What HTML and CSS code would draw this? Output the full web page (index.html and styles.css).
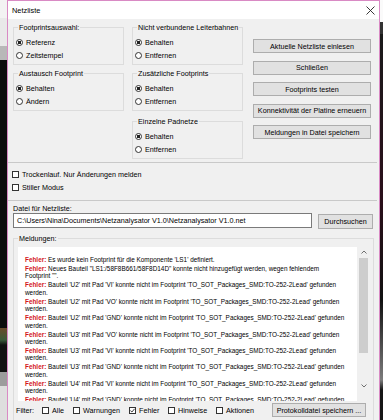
FILE: index.html
```html
<!DOCTYPE html>
<html lang="de">
<head>
    <meta charset="UTF-8">
    <title>Netzliste</title>
    <link rel="stylesheet" href="styles.css">
</head>
<body>
    <div class="screen">
        <div class="bg-left"></div>

        <div class="dialog">
            <div class="titlebar">
                <span class="title">Netzliste</span>
                <svg class="close" width="9" height="9" viewBox="0 0 9 9">
                    <path d="M0.5 0.5 L8.5 8.5 M8.5 0.5 L0.5 8.5" stroke="#222" stroke-width="0.9" fill="none"/>
                </svg>
            </div>

            <div class="content">
                <div class="top">
                    <div class="col">
                        <div class="group">
                            <span class="group-title">Footprintsauswahl:</span>
                            <label class="option"><span class="radio checked"></span>Referenz</label>
                            <label class="option"><span class="radio"></span>Zeitstempel</label>
                        </div>
                        <div class="group">
                            <span class="group-title">Austausch Footprint</span>
                            <label class="option"><span class="radio checked"></span>Behalten</label>
                            <label class="option"><span class="radio"></span>Ändern</label>
                        </div>
                    </div>

                    <div class="col">
                        <div class="group">
                            <span class="group-title">Nicht verbundene Leiterbahnen</span>
                            <label class="option"><span class="radio checked"></span>Behalten</label>
                            <label class="option"><span class="radio"></span>Entfernen</label>
                        </div>
                        <div class="group">
                            <span class="group-title">Zusätzliche Footprints</span>
                            <label class="option"><span class="radio checked"></span>Behalten</label>
                            <label class="option"><span class="radio"></span>Entfernen</label>
                        </div>
                        <div class="group group-last">
                            <span class="group-title">Einzelne Padnetze</span>
                            <label class="option"><span class="radio checked"></span>Behalten</label>
                            <label class="option"><span class="radio"></span>Entfernen</label>
                        </div>
                    </div>

                    <div class="buttons">
                        <button class="btn">Aktuelle Netzliste einlesen</button>
                        <button class="btn">Schließen</button>
                        <button class="btn">Footprints testen</button>
                        <button class="btn">Konnektivität der Platine erneuern</button>
                        <button class="btn">Meldungen in Datei speichern</button>
                    </div>
                </div>

                <div class="sep"></div>

                <div class="checks">
                    <label class="option"><span class="checkbox"></span>Trockenlauf. Nur Änderungen melden</label>
                    <label class="option"><span class="checkbox"></span>Stiller Modus</label>
                </div>

                <div class="sep"></div>

                <div class="file">
                    <div class="file-label">Datei für Netzliste:</div>
                    <div class="file-row">
                        <div class="input">C:\Users\Nina\Documents\Netzanalysator V1.0\Netzanalysator V1.0.net</div>
                        <button class="btn btn-browse">Durchsuchen</button>
                    </div>
                </div>

                <div class="group messages">
                    <span class="group-title">Meldungen:</span>
                    <div class="log-box">
                        <div class="log">
                            <div class="entry"><b>Fehler:</b> Es wurde kein Footprint für die Komponente 'LS1' definiert.</div>
                            <div class="entry"><b>Fehler:</b> Neues Bauteil "LS1:/58F8B661/58F8D14D" konnte nicht hinzugefügt werden, wegen fehlendem Footprint&nbsp;"".</div>
                            <div class="entry"><b>Fehler:</b> Bauteil 'U2' mit Pad 'VI' konnte nicht im Footprint 'TO_SOT_Packages_SMD:TO-252-2Lead' gefunden werden.</div>
                            <div class="entry"><b>Fehler:</b> Bauteil 'U2' mit Pad 'VO' konnte nicht im Footprint 'TO_SOT_Packages_SMD:TO-252-2Lead' gefunden werden.</div>
                            <div class="entry"><b>Fehler:</b> Bauteil 'U2' mit Pad 'GND' konnte nicht im Footprint 'TO_SOT_Packages_SMD:TO-252-2Lead' gefunden werden.</div>
                            <div class="entry"><b>Fehler:</b> Bauteil 'U3' mit Pad 'VO' konnte nicht im Footprint 'TO_SOT_Packages_SMD:TO-252-2Lead' gefunden werden.</div>
                            <div class="entry"><b>Fehler:</b> Bauteil 'U3' mit Pad 'VI' konnte nicht im Footprint 'TO_SOT_Packages_SMD:TO-252-2Lead' gefunden werden.</div>
                            <div class="entry"><b>Fehler:</b> Bauteil 'U3' mit Pad 'GND' konnte nicht im Footprint 'TO_SOT_Packages_SMD:TO-252-2Lead' gefunden werden.</div>
                            <div class="entry"><b>Fehler:</b> Bauteil 'U4' mit Pad 'VI' konnte nicht im Footprint 'TO_SOT_Packages_SMD:TO-252-2Lead' gefunden werden.</div>
                            <div class="entry"><b>Fehler:</b> Bauteil 'U4' mit Pad 'GND' konnte nicht im Footprint 'TO_SOT_Packages_SMD:TO-252-2Lead' gefunden werden.</div>
                        </div>
                        <div class="scrollbar">
                            <svg width="6" height="4" viewBox="0 0 6 4"><path d="M0.5 3.5 L3 1 L5.5 3.5" stroke="#606060" stroke-width="0.9" fill="none"/></svg>
                            <div class="thumb"></div>
                            <svg width="6" height="4" viewBox="0 0 6 4"><path d="M0.5 0.5 L3 3 L5.5 0.5" stroke="#606060" stroke-width="0.9" fill="none"/></svg>
                        </div>
                    </div>

                    <div class="filter">
                        <span class="filter-label">Filter:</span>
                        <label class="option f-alle"><span class="checkbox"></span>Alle</label>
                        <label class="option f-warn"><span class="checkbox"></span>Warnungen</label>
                        <label class="option f-err"><span class="checkbox checked">
                            <svg width="5" height="5" viewBox="0 0 5 5"><path d="M0.4 2.6 L1.9 4 L4.6 0.8" stroke="#222" stroke-width="0.9" fill="none"/></svg>
                        </span>Fehler</label>
                        <label class="option f-hint"><span class="checkbox"></span>Hinweise</label>
                        <label class="option f-act"><span class="checkbox"></span>Aktionen</label>
                        <button class="btn btn-log">Protokolldatei speichern ...</button>
                    </div>
                </div>
            </div>
        </div>

        <div class="bg-right"></div>
    </div>
</body>
</html>
```

FILE: styles.css
```css
* {
    margin: 0;
    padding: 0;
    box-sizing: border-box;
}

body {
    font-family: 'Liberation Sans', Arial, sans-serif;
    font-size: 7.2px;
    color: #000;
    background: #101010;
    overflow: hidden;
}

.screen {
    display: flex;
    height: 420px;
    overflow: hidden;
}

/* application behind the dialog */
.bg-left {
    width: 7px;
    flex-shrink: 0;
    background: linear-gradient(#f3f3f3 0, #f3f3f3 18px, #e9e9e9 18px, #e9e9e9 46px, #b8b8b8 46px, #b8b8b8 60px,
        #0d0d0d 60px, #0d0d0d 328px, #6b4a2a 328px, #3a5a3a 340px, #111 345px, #111 372px,
        #9c9c9c 372px, #9c9c9c 386px, #dedede 386px);
}

.bg-right {
    width: 3px;
    flex-shrink: 0;
    background: linear-gradient(#fafafa 0, #fafafa 22px, #333 22px, #333 34px, #1a1a1a 34px, #2a0f1a 200px, #111 300px, #7c7c7c 380px, #151515 390px);
}

.dialog {
    width: 373px;
    flex-shrink: 0;
    border: 1px solid #d98ac4;
    border-bottom: none;
    background: #f0f0f0;
    display: flex;
    flex-direction: column;
    overflow: hidden;
}

.titlebar {
    height: 18px;
    flex-shrink: 0;
    background: #fff;
    display: flex;
    align-items: center;
    justify-content: space-between;
    padding: 0 4px;
}

.title {
    font-size: 7.4px;
}

.close {
    display: block;
}

.content {
    padding: 8px 5px 0 5px;
    flex-shrink: 0;
}

.top {
    display: grid;
    grid-template-columns: 111px 111px 120px;
    column-gap: 8px;
}

.top .buttons {
    margin-left: 2px;
}

.col {
    display: flex;
    flex-direction: column;
    gap: 8px;
}

.col .group-last {
    margin-top: 2px;
}

.group {
    position: relative;
    border: 1px solid #dcdcdc;
    padding: 8px 2px 2px 2px;
}

.group-title {
    position: absolute;
    top: -5px;
    left: 4px;
    padding: 0 1px;
    line-height: 9px;
    background: #f0f0f0;
}

.option {
    display: flex;
    align-items: center;
    height: 13px;
    white-space: nowrap;
}

.radio {
    width: 7px;
    height: 7px;
    border: 1px solid #333;
    border-radius: 50%;
    background: #fff;
    margin-right: 3px;
    flex-shrink: 0;
}

.radio.checked {
    background: radial-gradient(circle, #222 0, #222 1.5px, #fff 2px);
}

.checkbox {
    width: 7px;
    height: 7px;
    border: 1px solid #333;
    background: #fff;
    margin-right: 3px;
    flex-shrink: 0;
    display: flex;
    align-items: center;
    justify-content: center;
}

.checkbox svg {
    display: block;
}

.buttons {
    display: flex;
    flex-direction: column;
    gap: 7.5px;
    padding-top: 12px;
}

.btn {
    font-family: inherit;
    font-size: 7.2px;
    color: #000;
    height: 14px;
    background: #e1e1e1;
    border: 1px solid #adadad;
    white-space: nowrap;
}

.sep {
    height: 1px;
    background: #c9c9c9;
    margin: 3px -3px 0 -5px;
}

.checks {
    padding: 5px 0 3px 0;
    margin-left: -1px;
}

.file-label {
    line-height: 9px;
    margin-top: 3px;
}

.file-row {
    display: flex;
    gap: 6px;
}

.input {
    width: 299px;
    height: 15px;
    background: #fff;
    border: 1px solid #7a7a7a;
    padding-left: 3px;
    line-height: 13px;
    white-space: nowrap;
    overflow: hidden;
}

.btn-browse {
    width: 55px;
    height: 15px;
    margin-top: 1px;
}

.messages {
    margin-top: 9px;
    padding: 8px 3px 0 4px;
    height: 200px;
}

.log-box {
    display: flex;
    height: 154px;
}

.log {
    flex: 1;
    background: #fff;
    padding: 9px 9px 0 7px;
    font-size: 6.4px;
    line-height: 7.4px;
    overflow: hidden;
}

.entry {
    margin-bottom: 1.6px;
}

.entry b {
    color: #d4161c;
}

.scrollbar {
    width: 13px;
    background: #f0f0f0;
    display: flex;
    flex-direction: column;
    align-items: center;
    padding-top: 3px;
}

.thumb {
    width: 9px;
    height: 95px;
    background: #cdcdcd;
    margin: 4px 0 31px 0;
}

.filter {
    display: flex;
    align-items: center;
    margin: 2px 0 0 -2px;
    height: 14px;
}

.filter-label {
    width: 26px;
}

.f-alle { width: 31px; }
.f-warn { width: 56px; }
.f-err { width: 39px; }
.f-hint { width: 48px; }
.f-act { width: 50px; }

.btn-log {
    width: 94px;
    margin-left: auto;
    margin-right: 4px;
}
```
